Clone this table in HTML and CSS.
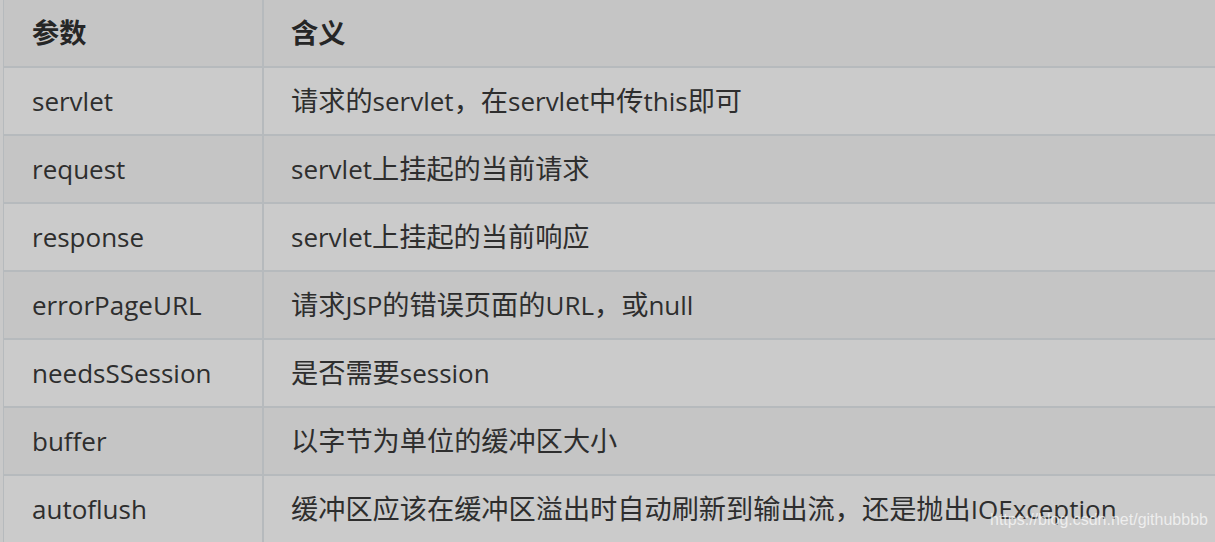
FILE: index.html
```html
<!DOCTYPE html>
<html lang="zh">
<head>
<meta charset="utf-8">
<title>参数</title>
<link rel="stylesheet" href="styles.css">
</head>
<body>
<div class="page">
  <table class="params">
    <thead>
      <tr><th class="c1"><span class="zh">参数</span></th><th class="c2"><span class="zh">含义</span></th></tr>
    </thead>
    <tbody>
      <tr class="odd"><td class="c1">servlet</td><td class="c2"><span class="zh">请求的</span>servlet<span class="zh">，在</span>servlet<span class="zh">中传</span>this<span class="zh">即可</span></td></tr>
      <tr class="even"><td class="c1">request</td><td class="c2">servlet<span class="zh">上挂起的当前请求</span></td></tr>
      <tr class="odd"><td class="c1">response</td><td class="c2">servlet<span class="zh">上挂起的当前响应</span></td></tr>
      <tr class="even"><td class="c1">errorPageURL</td><td class="c2"><span class="zh">请求</span>JSP<span class="zh">的错误页面的</span>URL<span class="zh">，或</span>null</td></tr>
      <tr class="odd"><td class="c1">needsSSession</td><td class="c2"><span class="zh">是否需要</span>session</td></tr>
      <tr class="even"><td class="c1">buffer</td><td class="c2"><span class="zh">以字节为单位的缓冲区大小</span></td></tr>
      <tr class="odd"><td class="c1">autoflush</td><td class="c2"><span class="zh">缓冲区应该在缓冲区溢出时自动刷新到输出流，还是抛出</span>IOException</td></tr>
    </tbody>
  </table>
  <div class="watermark">https://blog.csdn.net/githubbbb</div>
</div>
</body>
</html>
```
FILE: styles.css
```css
html, body {
  margin: 0;
  padding: 0;
  background: #c9c9c9;
  overflow: hidden;
}
.page {
  position: relative;
  width: 1215px;
  height: 542px;
  overflow: hidden;
}
.params {
  margin-left: 3px;
  border-collapse: separate;
  border-spacing: 0;
  border-left: 1px solid #b6babd;
  width: 1400px;
  font-family: "Open Sans", "Noto Sans CJK SC", sans-serif;
  font-size: 26px;
  color: #2e2e2e;
}
.params th, .params td {
  padding: 0;
  height: 66px;
  line-height: 66px;
  text-align: left;
  white-space: nowrap;
  border-bottom: 2px solid #b6babd;
  vertical-align: middle;
}
.params th {
  font-weight: 700;
  color: #262626;
}
.zh {
  font-family: "Noto Sans CJK SC", sans-serif;
  font-size: 27.2px;
  line-height: 1;
}
.params .c1 {
  width: 230px;
  padding-left: 28px;
  border-right: 2px solid #b6babd;
}
.params .c2 {
  padding-left: 27px;
}
thead tr, tr.even {
  background: #c5c5c5;
}
tr.odd {
  background: #cbcbcb;
}
.watermark {
  position: absolute;
  left: 990px;
  top: 510px;
  font-family: "Liberation Sans", Arial, sans-serif;
  font-size: 16px;
  line-height: 20px;
  color: rgba(250, 250, 250, 0.75);
  white-space: nowrap;
}
```
